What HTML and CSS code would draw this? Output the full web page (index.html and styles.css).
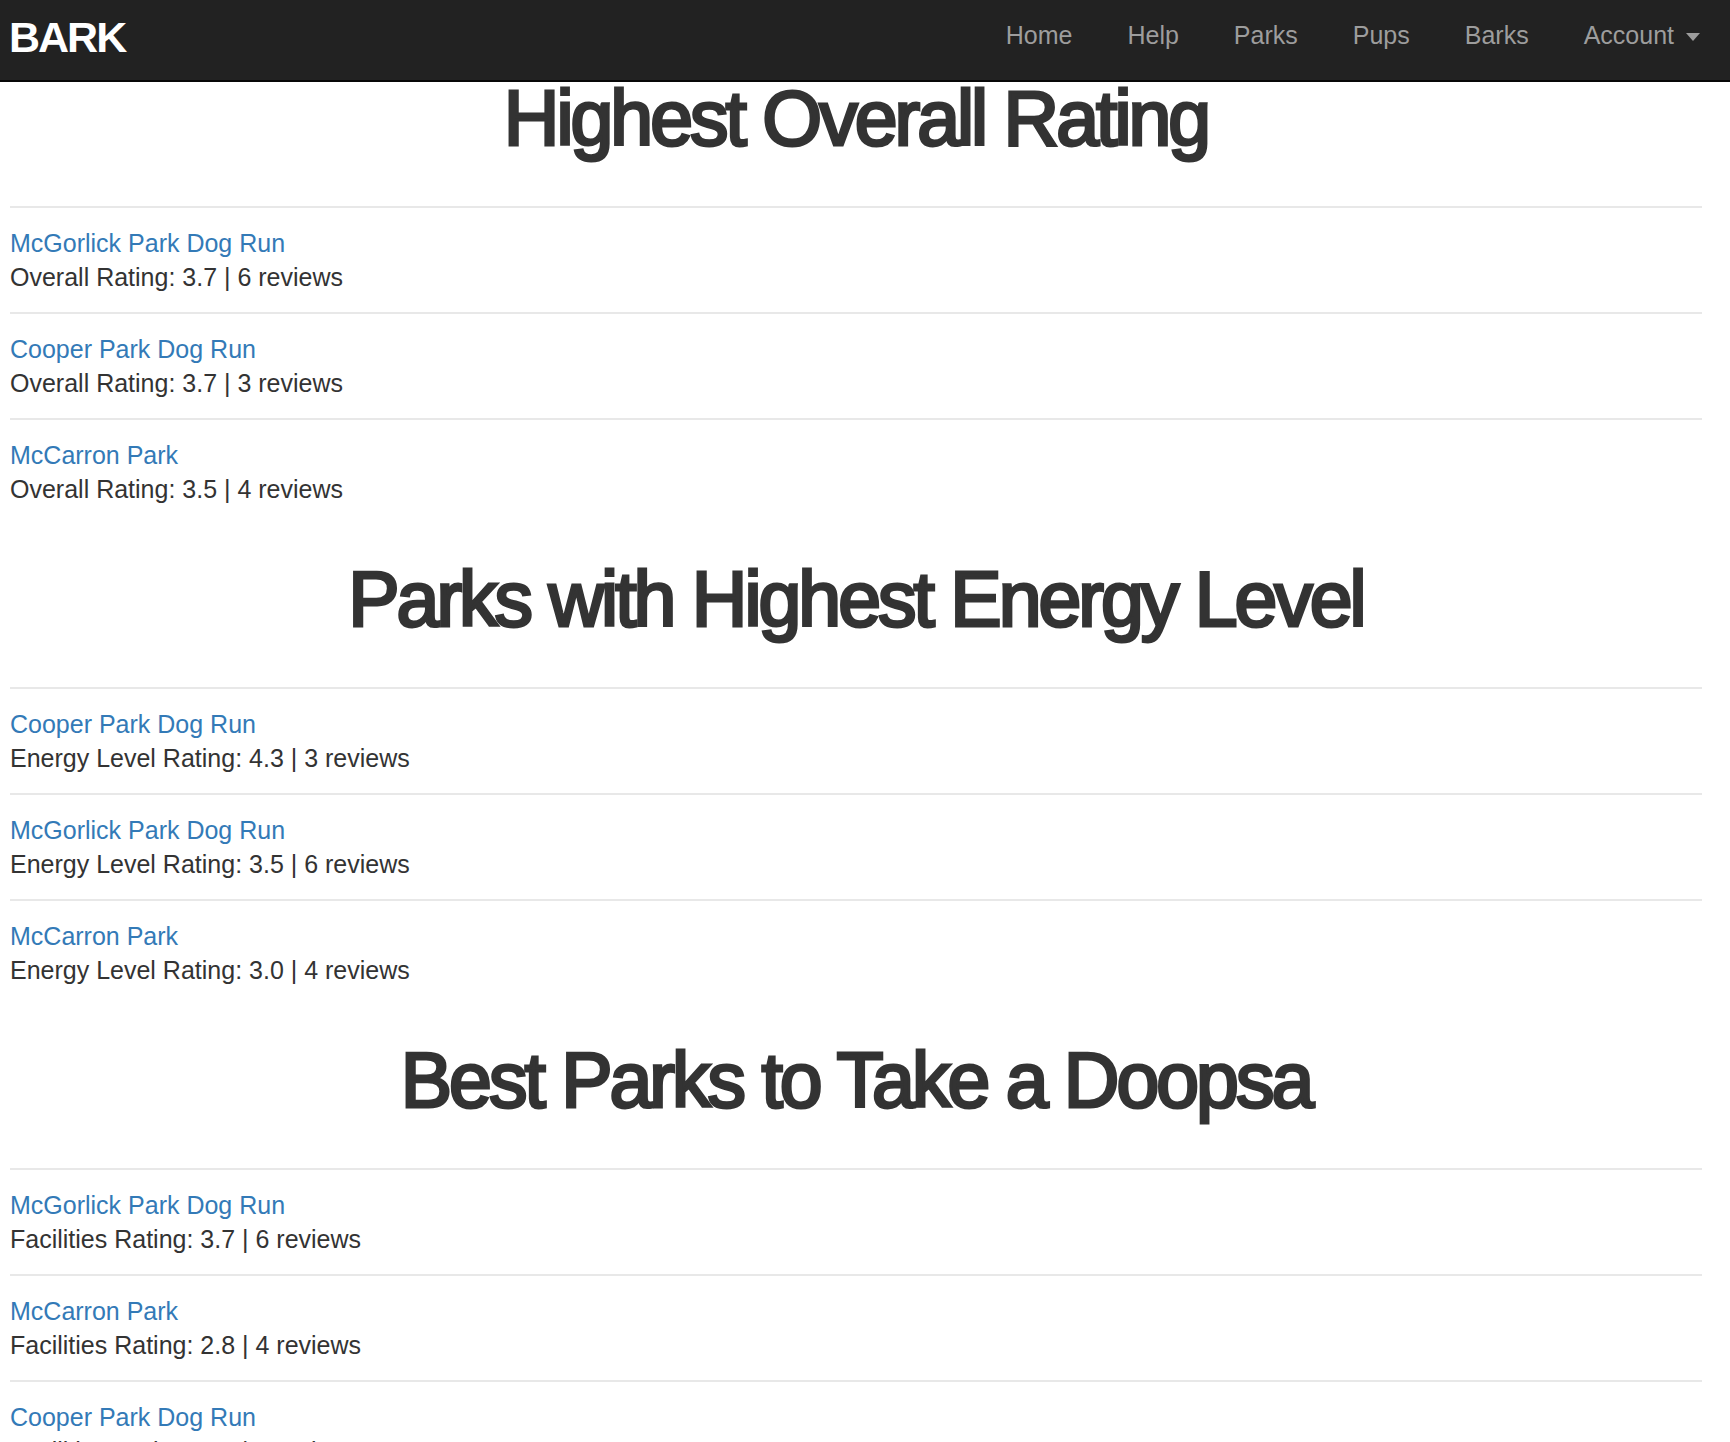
FILE: index.html
```html
<!DOCTYPE html>
<html lang="en">
<head>
  <meta charset="utf-8">
  <meta name="viewport" content="width=device-width, initial-scale=1">
  <title>Bark</title>
  <link rel="stylesheet" href="styles.css">
</head>
<body>
  <header class="navbar">
    <a class="logo" href="#">BARK</a>
    <nav aria-label="Main">
      <ul class="nav-list">
        <li><a class="nav-link" href="#">Home</a></li>
        <li><a class="nav-link" href="#">Help</a></li>
        <li><a class="nav-link" href="#">Parks</a></li>
        <li><a class="nav-link" href="#">Pups</a></li>
        <li><a class="nav-link" href="#">Barks</a></li>
        <li><button class="nav-link nav-toggle" type="button" aria-haspopup="true">Account<span class="caret"></span></button></li>
      </ul>
    </nav>
  </header>

  <main class="content">
    <section class="ranking">
      <h1>Highest Overall Rating</h1>
      <ul class="parks">
        <li class="park"><a href="#">McGorlick Park Dog Run</a><p>Overall Rating: 3.7 | 6 reviews</p></li>
        <li class="park"><a href="#">Cooper Park Dog Run</a><p>Overall Rating: 3.7 | 3 reviews</p></li>
        <li class="park"><a href="#">McCarron Park</a><p>Overall Rating: 3.5 | 4 reviews</p></li>
      </ul>
    </section>

    <section class="ranking">
      <h1>Parks with Highest Energy Level</h1>
      <ul class="parks">
        <li class="park"><a href="#">Cooper Park Dog Run</a><p>Energy Level Rating: 4.3 | 3 reviews</p></li>
        <li class="park"><a href="#">McGorlick Park Dog Run</a><p>Energy Level Rating: 3.5 | 6 reviews</p></li>
        <li class="park"><a href="#">McCarron Park</a><p>Energy Level Rating: 3.0 | 4 reviews</p></li>
      </ul>
    </section>

    <section class="ranking">
      <h1>Best Parks to Take a Doopsa</h1>
      <ul class="parks">
        <li class="park"><a href="#">McGorlick Park Dog Run</a><p>Facilities Rating: 3.7 | 6 reviews</p></li>
        <li class="park"><a href="#">McCarron Park</a><p>Facilities Rating: 2.8 | 4 reviews</p></li>
        <li class="park"><a href="#">Cooper Park Dog Run</a><p>Facilities Rating: 2.3 | 3 reviews</p></li>
      </ul>
    </section>
  </main>
</body>
</html>
```
FILE: styles.css
```css
* {
  box-sizing: border-box;
}

body {
  margin: 0;
  padding-top: 76px;
  background: #fff;
  color: #333;
  font-family: "Helvetica Neue", "Liberation Sans", Arial, sans-serif;
  font-size: 25px;
  line-height: 34px;
}

ul {
  margin: 0;
  padding: 0;
  list-style: none;
}

a {
  color: #337ab7;
  text-decoration: none;
}

/* Fixed bar across the top of the window */
.navbar {
  position: fixed;
  top: 0;
  left: 0;
  right: 0;
  z-index: 10;
  display: flex;
  justify-content: space-between;
  align-items: flex-start;
  height: 82px;
  padding: 18px 30px 0 9px;
  background: #222;
  border-bottom: 2px solid #080808;
}

.logo {
  color: #fff;
  font-size: 43px;
  font-weight: bold;
  line-height: 38px;
  letter-spacing: -2px;
}

.nav-list {
  display: flex;
  gap: 55px;
}

.nav-link {
  display: block;
  color: #9d9d9d;
}

.nav-toggle {
  display: flex;
  align-items: center;
  gap: 12px;
  padding: 0;
  border: 0;
  background: none;
  font: inherit;
}

.caret {
  margin-top: 4px;
  border-top: 8px solid;
  border-left: 7px solid transparent;
  border-right: 7px solid transparent;
}

.content {
  padding: 0 28px 52px 10px;
}

.ranking + .ranking {
  margin-top: 33px;
}

.ranking h1 {
  margin: 0 0 46px;
  font-size: 77px;
  font-weight: normal;
  line-height: 84px;
  letter-spacing: -3px;
  text-align: center;
  -webkit-text-stroke: 3px #333;
}

.park {
  padding: 18px 0;
  border-top: 2px solid #e8e8e8;
}

.park p {
  margin: 0;
}
```
